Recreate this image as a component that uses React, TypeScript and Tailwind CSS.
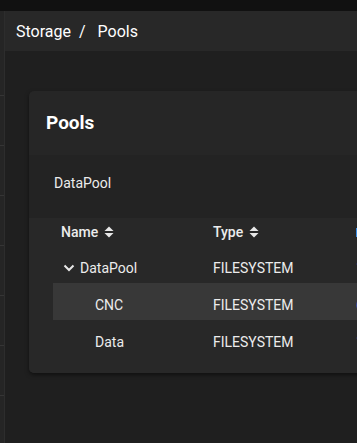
import React from 'react';

const SortIcon: React.FC = () => (
  <svg width="10" height="12" viewBox="0 0 10 12" className="ml-[6px]">
    <path d="M5 0.5 L9.5 5 H0.5 Z" fill="#e8e8e8" />
    <path d="M5 11.5 L9.5 7 H0.5 Z" fill="#e8e8e8" />
  </svg>
);

const Chevron: React.FC = () => (
  <svg width="12" height="8" viewBox="0 0 12 8" className="mr-[5px]">
    <path d="M1.5 1.5 L6 6 L10.5 1.5" stroke="#e8e8e8" strokeWidth="2" fill="none" />
  </svg>
);

interface Row {
  name: string;
  type: string;
  nested: boolean;
  expandable?: boolean;
  active?: boolean;
  used: string;
}

const rows: Row[] = [
  { name: 'DataPool', type: 'FILESYSTEM', nested: false, expandable: true, used: '1' },
  { name: 'CNC', type: 'FILESYSTEM', nested: true, active: true, used: '6' },
  { name: 'Data', type: 'FILESYSTEM', nested: true, used: '1' },
];

const App: React.FC = () => {
  return (
    <div
      className="w-[357px] h-[443px] bg-[#1f1f1f] flex flex-col overflow-hidden text-[#ececec]"
      style={{ fontFamily: 'Roboto, "Liberation Sans", sans-serif' }}
    >
      {/* Top bar */}
      <div className="h-[11px] bg-[#111111] shrink-0" />

      <div className="flex flex-1 min-h-0">
        {/* Collapsed sidebar */}
        <div className="w-[5px] shrink-0 bg-[#252525] border-r border-[#2d2d2d] flex flex-col">
          <div className="h-[85px] border-b border-[#353535]" />
          {[0, 1, 2, 3, 4, 5].map((i) => (
            <div key={i} className="h-[50px] border-b border-[#353535]" />
          ))}
        </div>

        <div className="flex-1 min-w-0 flex flex-col">
          {/* Breadcrumb */}
          <div className="h-[40px] shrink-0 bg-[#282828] flex items-center pl-[11px] pt-[1px] text-[16px] text-white">
            <span>Storage</span>
            <span className="mx-[8px]">/</span>
            <span className="ml-[4px]">Pools</span>
          </div>

          <div className="pt-[40px] pl-[24px]">
            <div className="rounded-l-[5px] bg-[#262626] shadow-[0_2px_4px_rgba(0,0,0,0.5)] w-[340px] overflow-hidden">
              <h1 className="pt-[20px] pl-[17px] h-[64px] text-[19px] font-bold text-white leading-[24px]">Pools</h1>

              <div className="bg-[#232323] h-[63px] flex items-center pl-[25px] pb-[6px] text-[14px] text-[#ececec]">
                DataPool
              </div>

              <div className="bg-[#282828] pl-[24px] pb-[16px]">
                {/* Header */}
                <div className="h-[28px] flex text-[14px] font-medium text-[#ececec] leading-[20px] pt-[4px]">
                  <div className="w-[160px] pl-[8px] h-[20px] flex items-center">
                    Name
                    <SortIcon />
                  </div>
                  <div className="w-[143px] h-[20px] flex items-center">
                    Type
                    <SortIcon />
                  </div>
                  <div className="h-[20px] flex items-center">
                    <span className="w-[4px] h-[9px] bg-[#3a8ee6]" />
                  </div>
                </div>

                {rows.map((r) => (
                  <div
                    key={r.name}
                    className={`h-[37px] flex items-start text-[14px] leading-[20px] pt-[12px] ${r.active ? 'bg-[#383838]' : ''}`}
                  >
                    <div className={`w-[160px] h-[20px] flex items-center ${r.nested ? 'pl-[42px]' : 'pl-[10px]'}`}>
                      {r.expandable && <Chevron />}
                      {r.name}
                    </div>
                    <div className="w-[143px] h-[20px]">{r.type}</div>
                    <div className="h-[20px] text-[#3a8ee6]">{r.used}</div>
                  </div>
                ))}
              </div>
            </div>
          </div>
        </div>
      </div>
    </div>
  );
};

export default App;
